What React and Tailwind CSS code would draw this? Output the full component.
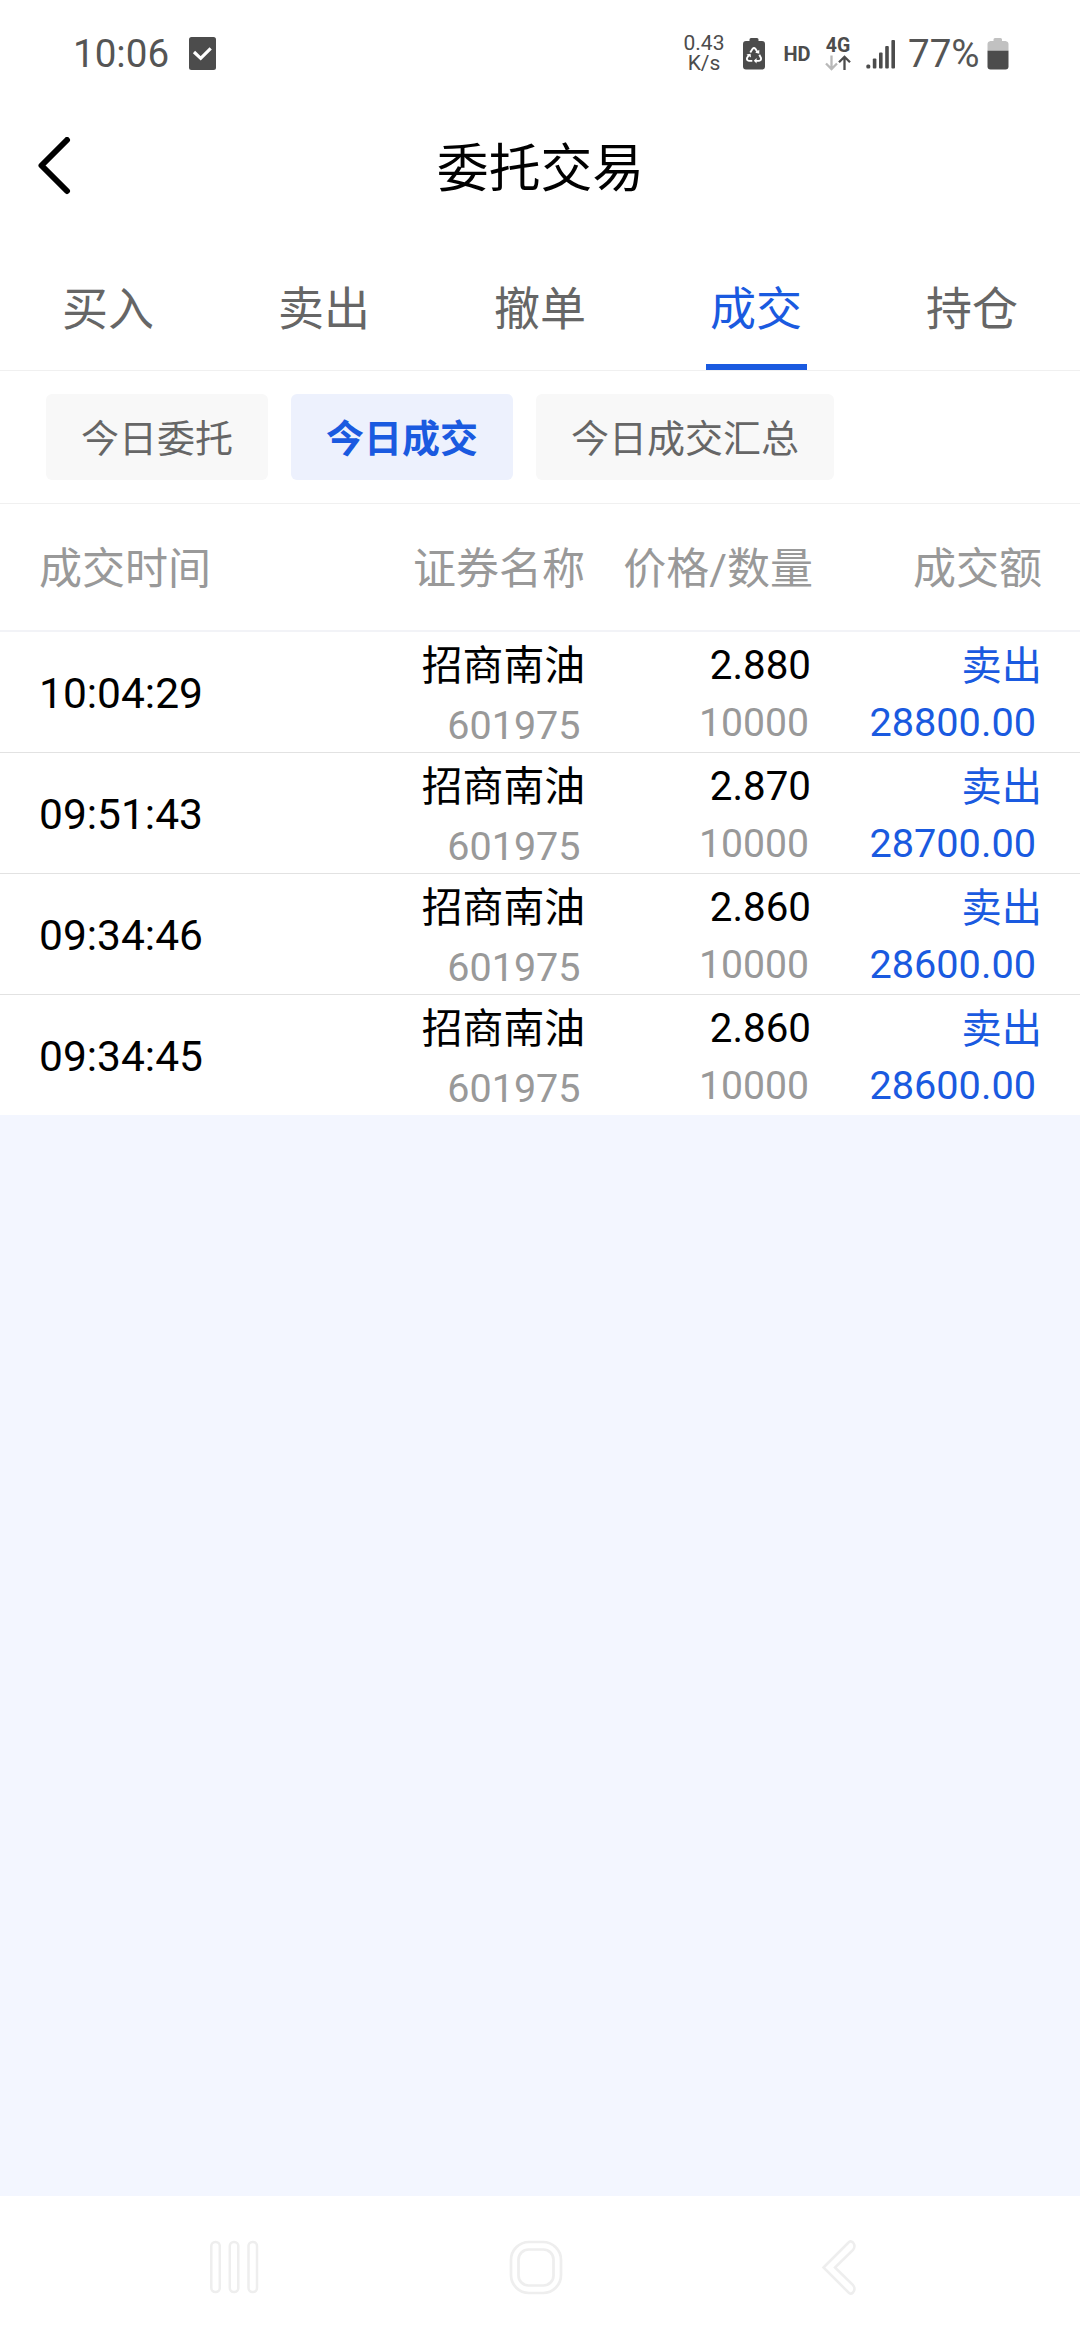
const tabs = ['买入', '卖出', '撤单', '成交', '持仓'];
const activeTab = '成交';

const filters = ['今日委托', '今日成交', '今日成交汇总'];
const activeFilter = '今日成交';

const trades = [
  { time: '10:04:29', name: '招商南油', code: '601975', price: '2.880', qty: '10000', side: '卖出', amount: '28800.00' },
  { time: '09:51:43', name: '招商南油', code: '601975', price: '2.870', qty: '10000', side: '卖出', amount: '28700.00' },
  { time: '09:34:46', name: '招商南油', code: '601975', price: '2.860', qty: '10000', side: '卖出', amount: '28600.00' },
  { time: '09:34:45', name: '招商南油', code: '601975', price: '2.860', qty: '10000', side: '卖出', amount: '28600.00' },
];

function StatusBar() {
  return (
    <div className="flex h-[107px] items-center pl-[73px] pr-[71px] text-[#4c4c4c]">
      <span className="w-[99px] text-[38.6px] leading-[40px] text-[#555555]">10:06</span>
      <svg className="ml-[17px] shrink-0" width="27" height="33" viewBox="0 0 27 33">
        <rect width="27" height="33" rx="2.5" fill="#4c4c4c" />
        <path d="M5 15 L11.7 21.3 L21.7 11.3" fill="none" stroke="#fff" strokeWidth="3.2" />
      </svg>

      <div className="ml-auto flex items-center">
        <div className="flex w-[42px] flex-col items-center text-[21px] leading-[19.5px]">
          <span>0.43</span>
          <span>K/s</span>
        </div>
        <svg className="ml-[18px] shrink-0" width="22" height="32" viewBox="0 0 22 32">
          <path d="M6.500 3 V1.500 Q6.500 0 8 0 H14 Q15.500 0 15.500 1.500 V3 H19 Q22 3 22 6 V28.500 Q22 31.500 19 31.500 H3 Q0 31.500 0 28.500 V6 Q0 3 3 3 Z" fill="#4c4c4c" />
          <g fill="none" stroke="#fff" strokeWidth="1.900">
            <path d="M7.300 14.500 L9.600 10.800 Q11 9.300 12.400 10.800 L14.600 14.300" />
            <path d="M16.300 16.800 L18 20 Q18.500 22.700 16 22.900 L12.500 22.900" />
            <path d="M9.300 22.900 L6 22.900 Q3.500 22.700 4 20 L6 16.800" />
          </g>
          <path d="M12.200 14.800 L16.300 15.800 L16.300 11.800 Z M13.600 19.900 V25.600 L10.800 22.800 Z M3.400 16.600 L7.600 15.800 L8 19.600 Z" fill="#fff" />
        </svg>
        <span className="ml-[18px] w-[28px] text-center text-[20px] font-bold leading-[32px]">HD</span>
        <div className="ml-[13px] flex w-[28px] flex-col items-center">
          <span className="text-[19.5px] font-bold leading-[18px]">4G</span>
          <svg width="26" height="16" viewBox="0 0 26 16" fill="none" strokeWidth="2.300">
            <path d="M6.500 0.500 V14 M1 8.500 L6.500 14 L12 8.500" stroke="#b9b9b9" />
            <path d="M19.500 15 V2 M14 7.300 L19.500 1.800 L25 7.300" stroke="#4c4c4c" />
          </svg>
        </div>
        <svg className="ml-[14px] shrink-0" width="30" height="30" viewBox="0 0 30 30" fill="#4c4c4c">
          <rect x="0.300" y="25.500" width="4" height="4" rx="1.500" />
          <rect x="6.800" y="19.500" width="3.600" height="10" rx="1" />
          <rect x="13" y="13.500" width="3.600" height="16" rx="1" />
          <rect x="19.200" y="7" width="3.600" height="22.500" rx="1" />
          <rect x="25.400" y="1" width="3.600" height="28.500" rx="1" />
        </svg>
        <span className="ml-[12px] w-[73px] text-[38.6px] leading-[40px] text-[#555555]">77%</span>
        <svg className="ml-[6px] shrink-0" width="22" height="32" viewBox="0 0 22 32">
          <path d="M6.500 3 V1.500 Q6.500 0 8 0 H13.500 Q15 0 15 1.500 V3 H18.500 Q21.500 3.500 21.500 6 V13 H0.500 V6 Q0.500 3.500 3.500 3 Z" fill="#c1c1c1" />
          <path d="M0.500 12.700 H21.500 V28.500 Q21.500 31.500 18.500 31.500 H3.500 Q0.500 31.500 0.500 28.500 Z" fill="#4c4c4c" />
        </svg>
      </div>
    </div>
  );
}

function TitleBar() {
  return (
    <header className="grid h-[120px] grid-cols-[120px_1fr_120px] items-center">
      <button className="pl-[36px]" aria-label="返回">
        <svg width="36" height="60" viewBox="0 0 36 60" fill="none" stroke="#000" strokeWidth="6" strokeLinecap="round" strokeLinejoin="round">
          <path d="M31 3 L5.500 28.500 L31 54" />
        </svg>
      </button>
      <h1 className="pl-px pt-[6px] text-center text-[51.84px] leading-[60px] text-black">委托交易</h1>
    </header>
  );
}

function Tabs() {
  return (
    <nav className="grid h-[144px] grid-cols-5 border-b border-[#f0f0f0]">
      {tabs.map((t) => {
        const on = t === activeTab;
        return (
          <button key={t} className="flex flex-col items-center justify-between pt-[52px]">
            <span className={on ? 'text-[46px] leading-[60px] text-[#1a5ae0]' : 'text-[46px] leading-[60px] text-[#666666]'}>{t}</span>
            <span className={on ? 'h-[6px] w-[101px] bg-[#1a5ae0]' : 'h-[6px] w-[101px]'} />
          </button>
        );
      })}
    </nav>
  );
}

function Filters() {
  return (
    <div className="flex h-[133px] items-start gap-[23px] border-b border-[#f0f0f0] pl-[46px] pt-[23px]">
      {filters.map((f) => (
        <button
          key={f}
          className={
            f === activeFilter
              ? 'h-[86px] rounded-[6px] bg-[#edf1fd] px-[35px] pt-[2px] text-[38px] font-bold leading-[86px] text-[#1a5ae0]'
              : 'h-[86px] rounded-[6px] bg-[#f8f8f8] px-[35px] pt-[2px] text-[38px] leading-[86px] text-[#666666]'
          }
        >
          {f}
        </button>
      ))}
    </div>
  );
}

function TradeRow({ trade }) {
  return (
    <div className="grid h-[121px] grid-cols-[250px_296px_226px_231px] border-b border-[#e2e2e2] bg-white pl-[39px] last:h-[120px] last:border-b-0">
      <div className="pt-[2px] text-[42.5px] leading-[119px] text-black">{trade.time}</div>
      <div className="flex flex-col items-end pt-[4px]">
        <span className="text-[40.8px] leading-[60px] text-black">{trade.name}</span>
        <span className="pr-[4.5px] text-[39.5px] leading-[60px] text-[#999999]">{trade.code}</span>
      </div>
      <div className="flex flex-col items-end pt-[4px]">
        <span className="text-[40.3px] leading-[60px] text-black">{trade.price}</span>
        <span className="pr-[2px] text-[39.2px] leading-[54px] text-[#999999]">{trade.qty}</span>
      </div>
      <div className="flex flex-col items-end pt-[5px] text-[#1a5ae0]">
        <span className="text-[40.3px] leading-[60px]">{trade.side}</span>
        <span className="pr-[6px] text-[39.7px] leading-[52px]">{trade.amount}</span>
      </div>
    </div>
  );
}

function NavBar() {
  return (
    <div className="flex h-[144px] items-start bg-white pl-[208px] pt-[43px]">
      <svg width="52" height="56" viewBox="0 0 52 56" fill="none" stroke="#eeeeee" strokeWidth="2.500">
        <rect x="3.300" y="3" width="8.500" height="50" rx="4" />
        <rect x="21.800" y="3" width="8.500" height="50" rx="4" />
        <rect x="40.500" y="3" width="8.500" height="50" rx="4" />
      </svg>
      <svg className="ml-[248px]" width="56" height="56" viewBox="0 0 56 56" fill="none" stroke="#eeeeee" strokeWidth="2.700">
        <rect x="3" y="3" width="50" height="51" rx="18" />
        <rect x="10.500" y="10.500" width="35" height="36" rx="10" />
      </svg>
      <svg className="ml-[256px]" width="40" height="58" viewBox="0 0 40 58" fill="none" stroke="#eeeeee" strokeWidth="2.500">
        <path d="M3.500 28.500 L29 3 Q31 1.500 33 3.500 Q36 7 33 11 L15 28.500 L33 46 Q36 50 33 53.500 Q31 55.500 29 54 Z" />
      </svg>
    </div>
  );
}

export default function App() {
  return (
    <div className="flex h-[2340px] w-[1080px] flex-col overflow-hidden bg-[#f3f6ff] font-[Roboto,'Noto_Sans_CJK_SC',sans-serif]">
      <div className="bg-white">
        <StatusBar />
        <TitleBar />
        <Tabs />
        <Filters />
        <div className="grid h-[128px] grid-cols-[250px_296px_228px_229px] border-b-2 border-[#f2f3f7] pl-[39px] pt-[35px] text-[43px] leading-[60px] text-[#999999]">
          <span>成交时间</span>
          <span className="text-right">证券名称</span>
          <span className="whitespace-nowrap text-right">价格/数量</span>
          <span className="text-right">成交额</span>
        </div>
      </div>
      <div>
        {trades.map((trade) => (
          <TradeRow key={trade.time} trade={trade} />
        ))}
      </div>
      <div className="flex-1" />
      <NavBar />
    </div>
  );
}
